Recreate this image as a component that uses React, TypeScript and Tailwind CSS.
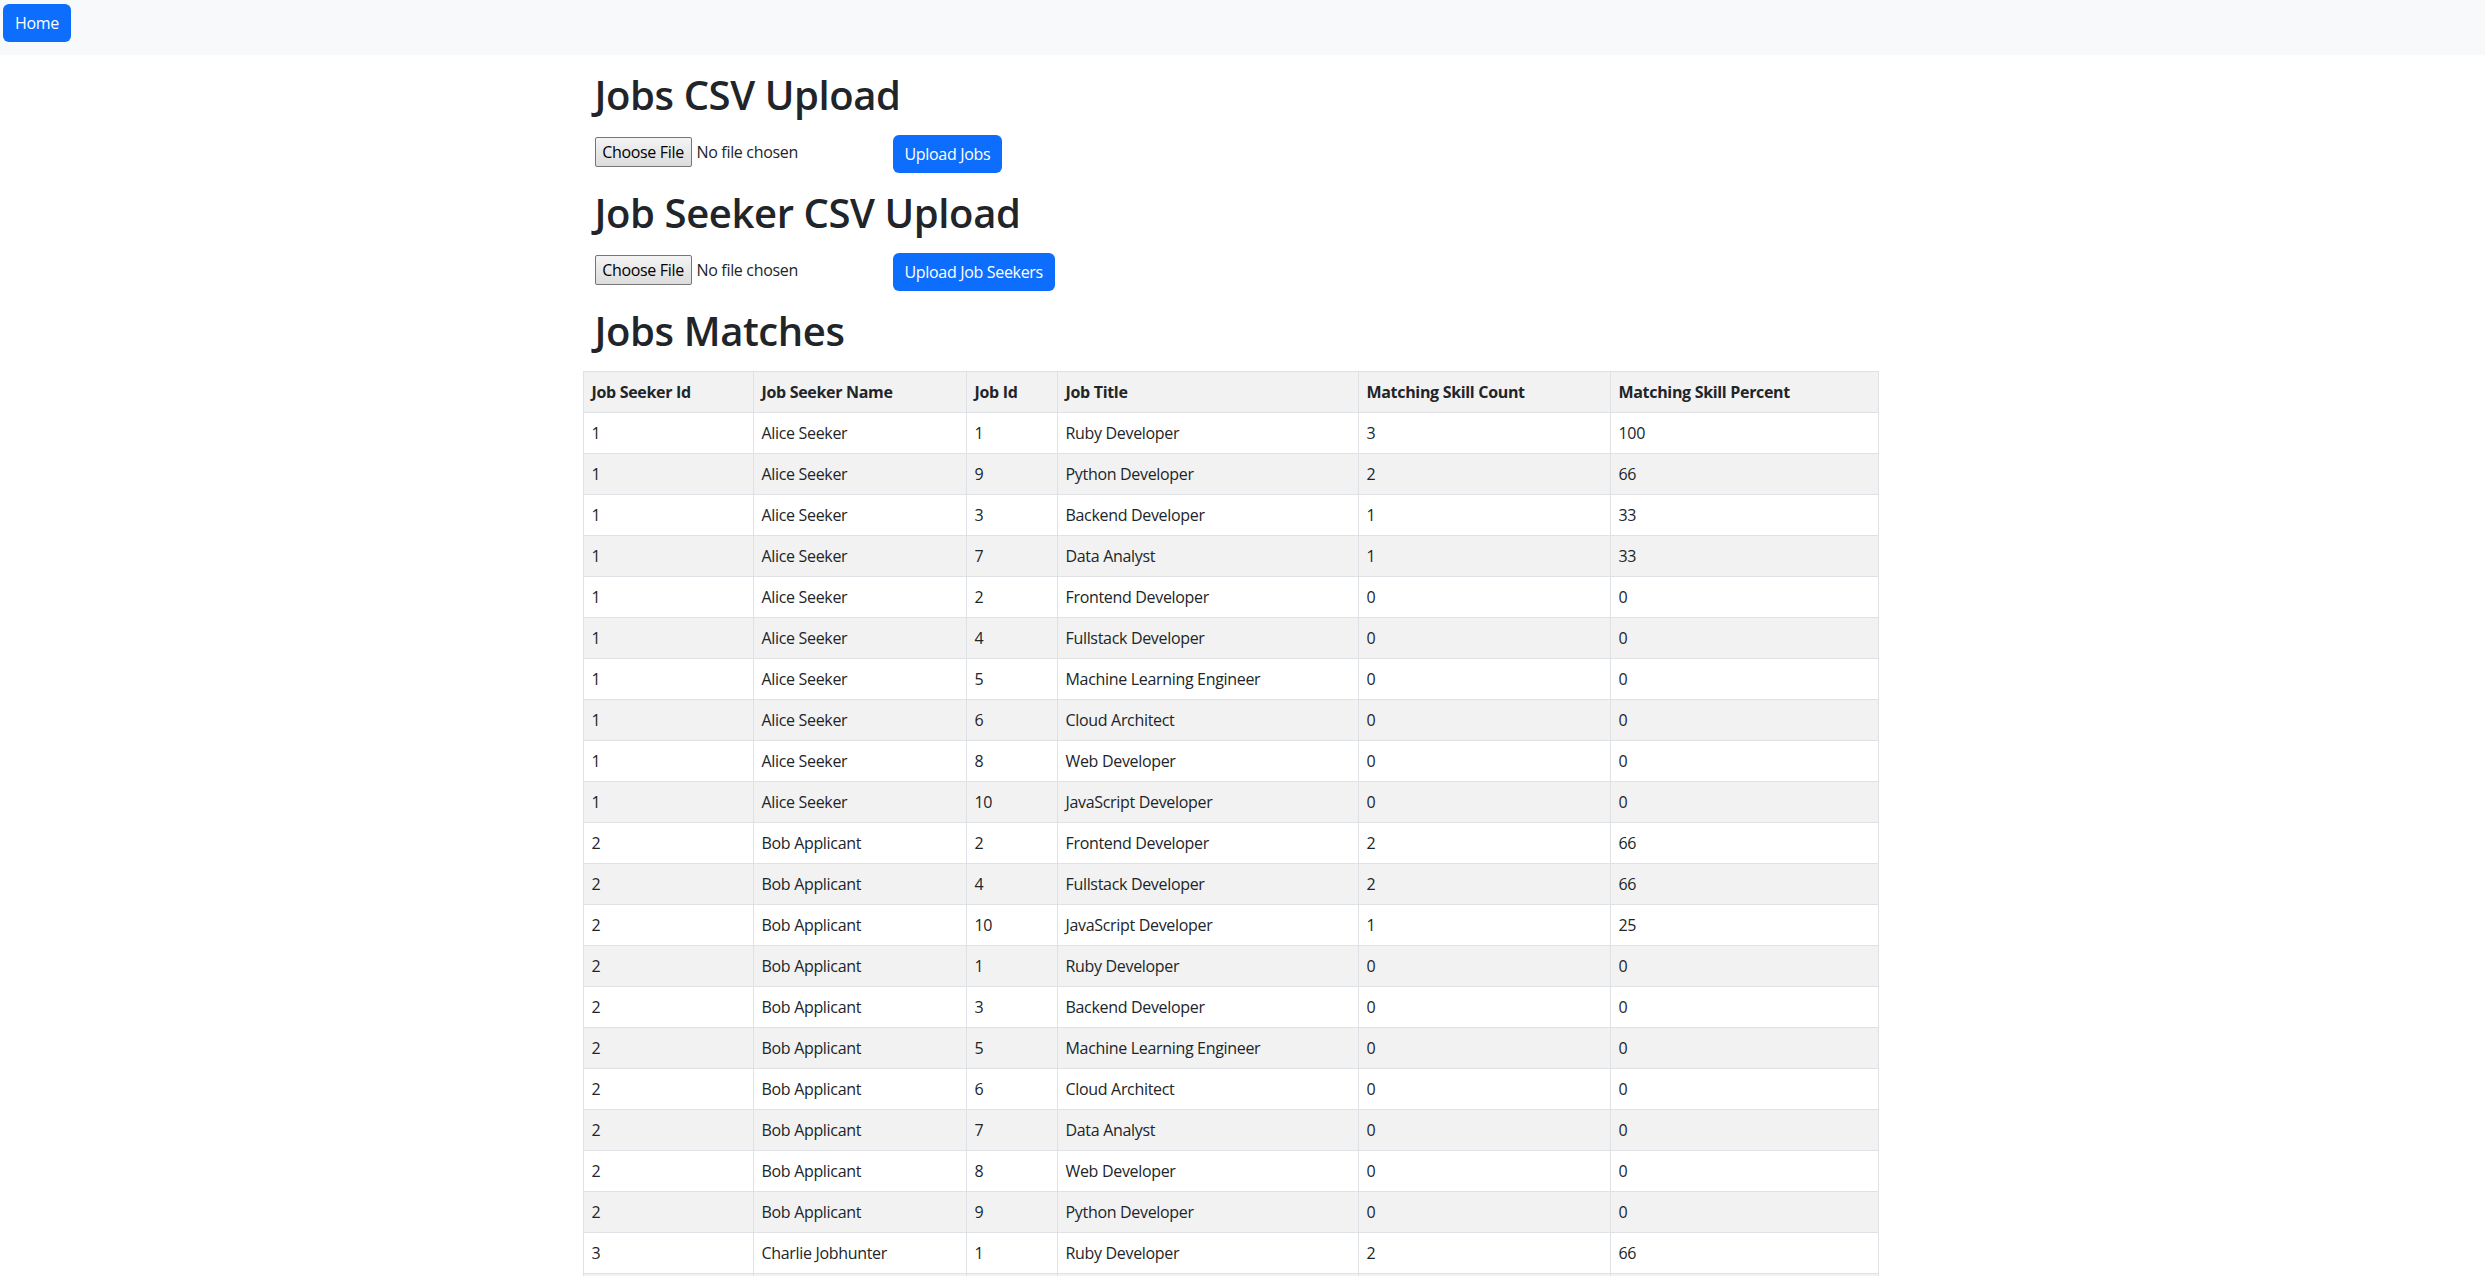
import React from "react";

type Match = {
    seekerId: number;
    seekerName: string;
    jobId: number;
    jobTitle: string;
    count: number;
    percent: number;
};

const rows: [number, string, number, string, number, number][] = [
    [1, "Alice Seeker", 1, "Ruby Developer", 3, 100],
    [1, "Alice Seeker", 9, "Python Developer", 2, 66],
    [1, "Alice Seeker", 3, "Backend Developer", 1, 33],
    [1, "Alice Seeker", 7, "Data Analyst", 1, 33],
    [1, "Alice Seeker", 2, "Frontend Developer", 0, 0],
    [1, "Alice Seeker", 4, "Fullstack Developer", 0, 0],
    [1, "Alice Seeker", 5, "Machine Learning Engineer", 0, 0],
    [1, "Alice Seeker", 6, "Cloud Architect", 0, 0],
    [1, "Alice Seeker", 8, "Web Developer", 0, 0],
    [1, "Alice Seeker", 10, "JavaScript Developer", 0, 0],
    [2, "Bob Applicant", 2, "Frontend Developer", 2, 66],
    [2, "Bob Applicant", 4, "Fullstack Developer", 2, 66],
    [2, "Bob Applicant", 10, "JavaScript Developer", 1, 25],
    [2, "Bob Applicant", 1, "Ruby Developer", 0, 0],
    [2, "Bob Applicant", 3, "Backend Developer", 0, 0],
    [2, "Bob Applicant", 5, "Machine Learning Engineer", 0, 0],
    [2, "Bob Applicant", 6, "Cloud Architect", 0, 0],
    [2, "Bob Applicant", 7, "Data Analyst", 0, 0],
    [2, "Bob Applicant", 8, "Web Developer", 0, 0],
    [2, "Bob Applicant", 9, "Python Developer", 0, 0],
    [3, "Charlie Jobhunter", 1, "Ruby Developer", 2, 66],
    [3, "Charlie Jobhunter", 3, "Backend Developer", 1, 33],
];

const matches: Match[] = rows.map(([seekerId, seekerName, jobId, jobTitle, count, percent]) => ({
    seekerId,
    seekerName,
    jobId,
    jobTitle,
    count,
    percent,
}));

function FileInput() {
    return (
        <div className="flex items-center w-[298px] h-[30px] mt-[2px] text-[16px] text-[#212529]">
            <span className="h-[30px] w-[97px] flex items-center justify-center border border-[#767676] rounded-[2px] bg-gradient-to-b from-[#f4f4f4] to-[#dcdcdc] text-black">
                Choose File
            </span>
            <span className="ml-[5px]">No file chosen</span>
        </div>
    );
}

function UploadRow({ label }: { label: string }) {
    return (
        <form className="flex items-start" onSubmit={(e) => e.preventDefault()}>
            <FileInput />
            <button
                type="submit"
                className="h-[38px] px-3 rounded-[6px] bg-[#0d6efd] text-white text-[16px] leading-6"
            >
                {label}
            </button>
        </form>
    );
}

export default function App() {
    const cols = ["w-[170px]", "w-[213px]", "w-[91px]", "w-[301px]", "w-[252px]", "w-[268px]"];
    const heads = [
        "Job Seeker Id",
        "Job Seeker Name",
        "Job Id",
        "Job Title",
        "Matching Skill Count",
        "Matching Skill Percent",
    ];

    return (
        <div className="h-screen overflow-hidden bg-white text-[#212529] font-['Open_Sans',sans-serif] text-[16px] leading-6 tracking-[-0.02em]">
            {/* Navbar */}
            <nav className="h-[55px] bg-[#f8f9fa] pt-[4px] pl-[3px]">
                <button className="h-[38px] px-3 rounded-[6px] bg-[#0d6efd] text-white text-[16px] leading-6">
                    Home
                </button>
            </nav>

            <div className="w-[1320px] mx-auto pt-4">
                <div className="px-3">
                    <h1 className="text-[40px] leading-[1.2] font-semibold tracking-[-0.01em] mb-4">Jobs CSV Upload</h1>
                    <UploadRow label="Upload Jobs" />

                    <h1 className="text-[40px] leading-[1.2] font-semibold tracking-[-0.01em] mt-4 mb-4">Job Seeker CSV Upload</h1>
                    <UploadRow label="Upload Job Seekers" />

                    <h1 className="text-[40px] leading-[1.2] font-semibold tracking-[-0.01em] mt-4 mb-4">Jobs Matches</h1>
                </div>

                <table className="table-fixed border-collapse w-[1296px]">
                    <thead>
                        <tr className="bg-[#f2f2f2]">
                            {heads.map((h, i) => (
                                <th
                                    key={h}
                                    className={`${cols[i]} h-[41px] border border-[#dee2e6] px-2 py-0 text-left font-bold`}
                                >
                                    {h}
                                </th>
                            ))}
                        </tr>
                    </thead>
                    <tbody>
                        {matches.map((m, i) => (
                            <tr key={i} className={i % 2 === 1 ? "bg-[#f2f2f2]" : "bg-white"}>
                                <td className="h-[41px] border border-[#dee2e6] px-2 py-0">{m.seekerId}</td>
                                <td className="h-[41px] border border-[#dee2e6] px-2 py-0">{m.seekerName}</td>
                                <td className="h-[41px] border border-[#dee2e6] px-2 py-0">{m.jobId}</td>
                                <td className="h-[41px] border border-[#dee2e6] px-2 py-0">{m.jobTitle}</td>
                                <td className="h-[41px] border border-[#dee2e6] px-2 py-0">{m.count}</td>
                                <td className="h-[41px] border border-[#dee2e6] px-2 py-0">{m.percent}</td>
                            </tr>
                        ))}
                    </tbody>
                </table>
            </div>
        </div>
    );
}
